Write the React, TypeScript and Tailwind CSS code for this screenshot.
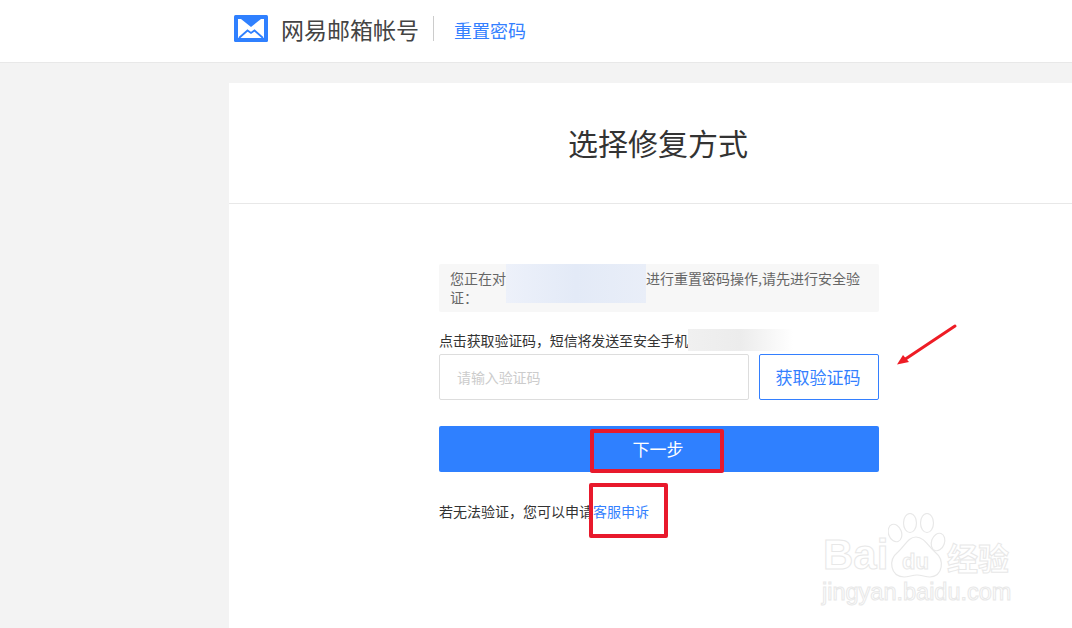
export default function App() {
  return (
    <div className="relative h-[628px] overflow-hidden bg-[#f3f3f3] font-['Noto_Sans_CJK_SC','Liberation_Sans',sans-serif] text-[#333]">
      {/* Header */}
      <header className="flex h-[63px] items-center border-b border-[#e8e8e8] bg-white pb-[5px] pl-[234px]">
        <svg width="34" height="27" viewBox="0 0 34 27">
          <rect width="34" height="27" rx="1.5" fill="#2f80ff" />
          <rect x="4" y="4" width="26" height="19" fill="#fff" />
          <path d="M7 4H27L17 12Z" fill="#2f80ff" />
          <path d="M5 23 13.5 15.5 17 18 20.5 15.5 29 23" fill="none" stroke="#2f80ff" strokeWidth="1.8" />
        </svg>
        <span className="ml-[13px] text-[23px] leading-[34px] text-[#444]">网易邮箱帐号</span>
        <span className="ml-[14px] h-[25px] w-px bg-[#ccc]" />
        <a className="ml-[20px] mt-[3px] text-[18px] leading-[26px] text-[#337fff]">重置密码</a>
      </header>

      {/* Card */}
      <main className="ml-[229px] mt-[20px] h-[560px] w-[860px] bg-white">
        <div className="flex h-[121px] items-center justify-center border-b border-[#e8e8e8] pb-[3px] pr-[2px]">
          <h1 className="text-[30px] font-normal leading-[40px] text-[#333]">选择修复方式</h1>
        </div>

        <div className="ml-[210px] w-[440px] pt-[60px]">
          <div className="h-[48px] rounded-[2px] bg-[#f7f7f7] px-[11px] pt-[5px] text-[14px] leading-[19px] text-[#666]">
            <div className="flex">
              <span>您正在对</span>
              <span className="-mt-[5px] mb-[-15px] w-[140px] bg-gradient-to-r from-[#edf1fa] via-[#e3eaf7] to-[#e9eef8]" />
              <span className="whitespace-nowrap">进行重置密码操作,请先进行安全验</span>
            </div>
            <div>证：</div>
          </div>

          <p className="mt-[16px] flex h-[24px] items-center whitespace-nowrap text-[14px] leading-[20px] tracking-[-0.15px] text-[#333]">
            <span>点击获取验证码，短信将发送至安全手机</span>
            <span className="h-[22px] w-[105px] bg-gradient-to-r from-[#f0f0f0] via-[#ececec] to-white" />
          </p>

          <div className="mt-[2px] flex gap-[10px]">
            <div className="flex h-[46px] w-[310px] items-center rounded-[2px] border border-[#ddd] bg-white pl-[17px] text-[14px] tracking-[-0.1px] text-[#ccc]">
              请输入验证码
            </div>
            <button
              type="button"
              className="h-[46px] w-[120px] rounded-[2px] border border-[#337fff] bg-white pr-[2px] text-[17px] text-[#337fff]"
            >
              获取验证码
            </button>
          </div>

          <button
            type="button"
            className="mt-[26px] h-[46px] w-full rounded-[2px] bg-[#2f80ff] pr-[2px] text-[17px] text-white"
          >
            下一步
          </button>

          <p className="mt-[29px] text-[14px] leading-[20px] text-[#333]">
            若无法验证，您可以申请<a className="text-[#337fff]">客服申诉</a>
          </p>
        </div>
      </main>

      {/* Annotations */}
      <div className="absolute left-[590px] top-[429px] h-[44px] w-[134px] rounded-[2px] border-[4px] border-[#e8192c]" />
      <div className="absolute left-[589px] top-[483px] h-[55px] w-[79px] rounded-[2px] border-[4px] border-[#e8192c]" />
      <svg className="absolute left-[890px] top-[318px]" width="74" height="54" viewBox="0 0 74 54">
        <path d="M65 8 14 42" stroke="#ee1c25" strokeWidth="3" strokeLinecap="round" fill="none" />
        <path d="M7 46.5 13 37 19 44Z" fill="#ee1c25" />
      </svg>

      {/* Watermark */}
      <div className="absolute left-[820px] top-[512px] h-[100px] w-[200px] whitespace-nowrap text-white [-webkit-text-stroke:1px_#e8e8e8]">
        <svg className="absolute left-[68px] top-[1px]" width="60" height="66" viewBox="0 0 60 66" fill="white" stroke="#e8e8e8" strokeWidth="1.2">
          <ellipse cx="7" cy="20" rx="6.5" ry="9" transform="rotate(-20 7 20)" />
          <ellipse cx="22" cy="10" rx="6.5" ry="9.5" />
          <ellipse cx="39" cy="10" rx="6.5" ry="9.5" />
          <ellipse cx="50" cy="29" rx="6.5" ry="9" transform="rotate(20 50 29)" />
          <path d="M28 24C20 24 17 33 10 39 0 47 2 63 16 64 21 64 24 62 29 62 34 62 37 64 42 64 55 63 57 47 47 39 40 33 36 24 28 24Z" />
        </svg>
        <span className="absolute left-[3px] top-[21px] font-['Liberation_Sans',sans-serif] text-[42px] font-bold leading-[44px]">Bai</span>
        <span className="absolute left-[82px] top-[37px] font-['Liberation_Sans',sans-serif] text-[22px] font-bold leading-[26px]">du</span>
        <span className="absolute left-[127px] top-[26px] text-[31px] font-bold leading-[38px]">经验</span>
        <span className="absolute left-[2px] top-[66px] font-['Liberation_Sans',sans-serif] text-[23.5px] leading-[28px]">jingyan.baidu.com</span>
      </div>
    </div>
  );
}
